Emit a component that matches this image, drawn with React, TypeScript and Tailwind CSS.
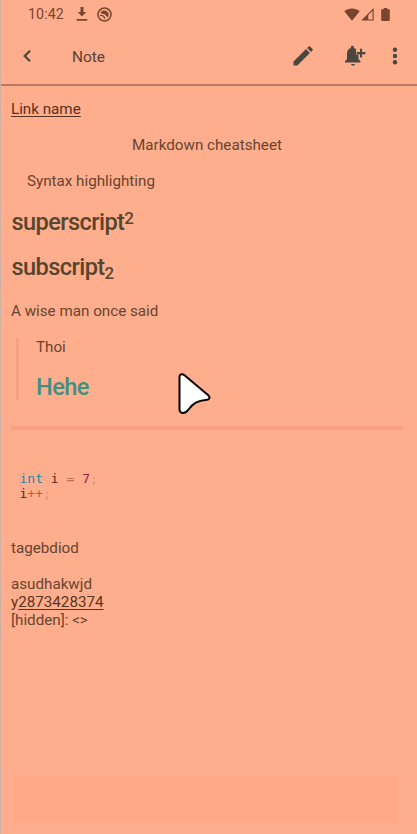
import React from "react";

function StatusBar() {
  return (
    <div className="flex h-7 items-center pl-[27px] pr-[27px] text-[#78452f]">
      <span className="w-[36px] whitespace-nowrap text-[14.2px] leading-7 tracking-[0.1px]">10:42</span>
      <svg className="ml-[12px]" width="12" height="14" viewBox="0 0 12 14" fill="currentColor">
        <path d="M4.500 0h3v5h2.700L6 9.600 1.800 5h2.700zM.7 12h10.600v1.700H.7z" />
      </svg>
      <svg className="ml-[9px]" width="15" height="15" viewBox="0 0 15 15" fill="none" stroke="currentColor">
        <circle cx="7.500" cy="7.500" r="6.500" strokeWidth="1.500" />
        <path d="M3.600 5.500C5.300 2.800 9.600 3 11.200 6c.8 1.500.5 3.300-.5 4.500L7.700 7.300 3.600 6.300Z" fill="currentColor" stroke="none" />
        <path d="M3 8.500c2.500-.6 4.400.8 4.700 3.300" strokeWidth="1.300" />
      </svg>
      <div className="ml-auto flex items-center">
        <svg width="16" height="13" viewBox="0 0 16 13" fill="currentColor">
          <path d="M.3 3.200C4.500-.5 11.500-.5 15.700 3.200L8 12.700z" />
        </svg>
        <svg className="ml-[1px]" width="13" height="13" viewBox="0 0 13 13" fill="currentColor">
          <path fillRule="evenodd" d="M.2 12.500 12.700 0v12.500zM7.300 11.400h4.200V2.900L7.300 7z" />
        </svg>
        <svg className="ml-[7px]" width="9" height="13" viewBox="0 0 9 13" fill="currentColor">
          <path d="M2.700 0h3.600v1.300H8c.5 0 .8.300.8.800v10c0 .5-.3.800-.8.800H1c-.5 0-.8-.3-.8-.8v-10c0-.5.300-.8.800-.8h1.700z" />
        </svg>
      </div>
    </div>
  );
}

function AppBar() {
  return (
    <header className="flex h-[58px] items-center border-b-2 border-[#b97960] pl-[21px] text-[#4b4740]">
      <svg width="10" height="14" viewBox="0 0 10 14" fill="none" stroke="currentColor" strokeWidth="2.200">
        <path d="M8 1.800 2.700 7 8 12.200" />
      </svg>
      <h1 className="ml-[40px] pt-px text-[15.4px] font-normal leading-5 text-[#583f33]">Note</h1>
      <div className="ml-auto flex items-center pr-[19px]">
        <svg width="20" height="20" viewBox="0 0 20 20" fill="currentColor">
          <path d="M.5 15.600 13 3.100l3.900 3.900L4.400 19.500H.5zM14.100 2 15.600.5q.7-.7 1.400 0l2.500 2.500q.7.700 0 1.400L18 5.900z" />
        </svg>
        <svg className="ml-[31px]" width="22" height="22" viewBox="0 0 22 22" fill="currentColor">
          <path d="M6.900 2.900V2.100q0-1.400 1.500-1.400T9.900 2.100v.8c.8.200 1.500.6 2.100 1.100v5.500h2.500V14l2 2.200v1.300H1v-1.300L3 14V8.700C3 5.900 4.300 3.500 6.900 2.900ZM7 19h4q-.2 1.800-2 1.800T7 19Z" />
          <path d="M16 3.800h2.100v3.300h3.300v2.100h-3.300v3.300H16V9.200h-3.300V7.100H16z" />
        </svg>
        <svg className="ml-[26px]" width="6" height="18" viewBox="0 0 6 18" fill="currentColor">
          <circle cx="3" cy="2.700" r="2.200" />
          <circle cx="3" cy="9" r="2.200" />
          <circle cx="3" cy="15.300" r="2.200" />
        </svg>
      </div>
    </header>
  );
}

function NoteContent() {
  return (
    <article className="flex flex-col pl-[10px] pr-[14px] pt-[14px] text-[15.2px] leading-[18px] text-[#67442f]">
      <p className="text-[#57321e]">
        <a className="underline decoration-1 underline-offset-2">Link name</a>
      </p>
      <p className="mt-[18px] text-center">Markdown cheatsheet</p>
      <p className="mt-[18px] pl-[16px]">Syntax highlighting</p>
      <h2 className="mt-[18px] flex h-[28px] items-start pl-[0.5px] text-[23.6px] font-medium leading-[28px] tracking-[-0.6px] text-[#58452e]">
        superscript<span className="-mt-[4px] text-[17px]">2</span>
      </h2>
      <h2 className="mt-[17px] flex h-[28px] items-start pl-[0.5px] text-[23.6px] font-medium leading-[28px] tracking-[-0.6px] text-[#58452e]">
        subscript<span className="mt-[6px] text-[17px]">2</span>
      </h2>
      <p className="mt-[21px]">A wise man once said</p>
      <blockquote className="ml-[5px] mt-[18px] h-[62px] border-l-[3px] border-[#f8a182] pl-[17px]">
        <p>Thoi</p>
        <h3 className="mt-[17px] text-[23.6px] font-medium leading-[28px] tracking-[-0.6px] text-[#438f82]">Hehe</h3>
      </blockquote>
      <div className="mt-[26px] h-[4px] bg-[#faa080]" />
      <pre className="ml-[8.5px] mt-[41px] font-['DejaVu_Sans_Mono','Liberation_Mono',monospace] text-[13px] leading-[15px] text-[#55271c]">
        <span className="text-[#1987a5]">int</span> i <span className="text-[#c96b4d]">=</span> <span className="text-[#a71f43]">7</span><span className="text-[#d99175]">;</span>{"\n"}i<span className="text-[#b86045]">++</span><span className="text-[#d99175]">;</span>
      </pre>
      <p className="mt-[38px]">tagebdiod</p>
      <p className="mt-[18px]">
        asudhakwjd
        <br />
        <span className="text-[#56351f]">y<a className="underline decoration-1 underline-offset-2">2873428374</a></span>
        <br />
        [hidden]: &lt;&gt;
      </p>
    </article>
  );
}

export default function App() {
  return (
    <main className="relative flex h-[834px] w-[417px] flex-col overflow-hidden border-l border-[#cfb0a5] bg-[#ffae8d] font-['Roboto','Liberation_Sans',sans-serif]">
      <StatusBar />
      <AppBar />
      <NoteContent />
      <div className="mb-[11px] ml-[13px] mr-[19px] mt-auto h-[47px] bg-[#ffa988]" />
      <svg className="absolute left-[176px] top-[372px]" width="35" height="43" viewBox="0 0 35 43">
        <path
          d="M2.500 5C2.500 2 5.500 1.400 7.500 3.300L31 23C34 25.700 32.200 28 28.500 28C20.500 28.500 16 31 11.500 37.500C8 42.500 2.500 42 2.500 37Z"
          fill="white"
          stroke="#080303"
          strokeWidth="2"
          strokeLinejoin="round"
        />
      </svg>
    </main>
  );
}
